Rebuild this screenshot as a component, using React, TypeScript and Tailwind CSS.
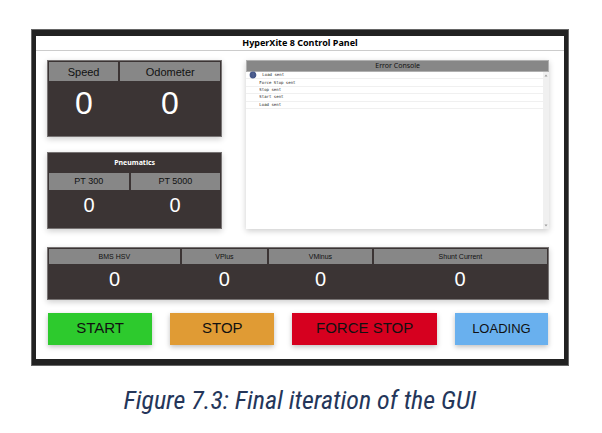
type Reading = { label: string; value: number; width: string };

const motion: Reading[] = [
  { label: "Speed", value: 0, width: "w-[41%]" },
  { label: "Odometer", value: 0, width: "w-[59%]" },
];

const pneumatics: Reading[] = [
  { label: "PT 300", value: 0, width: "w-[47%]" },
  { label: "PT 5000", value: 0, width: "w-[53%]" },
];

const electrical: Reading[] = [
  { label: "BMS HSV", value: 0, width: "w-[26.5%]" },
  { label: "VPlus", value: 0, width: "w-[17.5%]" },
  { label: "VMinus", value: 0, width: "w-[21%]" },
  { label: "Shunt Current", value: 0, width: "w-[35%]" },
];

const log = ["Load sent", "Force Stop sent", "Stop sent", "Start sent", "Load sent"];

const commands = [
  { label: "START", style: "bg-[#2dca2d] text-[15px]" },
  { label: "STOP", style: "bg-[#e09b34] text-[15px]" },
  { label: "FORCE STOP", style: "bg-[#d6001f] text-[15px]" },
  { label: "LOADING", style: "bg-[#69b0ee] text-[13px]" },
];

type TableProps = {
  readings: Reading[];
  title?: string;
  head: string;
  body: string;
};

function ReadingTable({ readings, title, head, body }: TableProps) {
  return (
    <div className="border border-[#777373] bg-[#3b3434] shadow-[0_2px_6px_rgba(0,0,0,0.2)]">
      <table className="w-full table-fixed border-collapse">
        {title && (
          <caption className="h-[19px] font-['Noto_Sans'] text-[7px] leading-[19px] font-bold text-white">
            {title}
          </caption>
        )}
        <thead>
          <tr>
            {readings.map((r) => (
              <th
                key={r.label}
                scope="col"
                className={`${r.width} ${head} border-x-2 border-y border-[#3b3434] bg-[#878787] p-0 font-normal text-[#111] first:border-l last:border-r`}
              >
                {r.label}
              </th>
            ))}
          </tr>
        </thead>
        <tbody>
          <tr>
            {readings.map((r) => (
              <td key={r.label} className={`${body} p-0 text-center align-top text-white`}>
                {r.value}
              </td>
            ))}
          </tr>
        </tbody>
      </table>
    </div>
  );
}

function ErrorConsole() {
  return (
    <section className="flex flex-col bg-white shadow-[0_2px_6px_rgba(0,0,0,0.2)]">
      <h2 className="border border-[#b0b0b0] bg-[#878787] text-center font-['Noto_Sans'] text-[7px] leading-[10px] text-[#111]">
        Error Console
      </h2>
      <div className="flex grow">
        <ul className="grid h-[37px] grow auto-rows-fr font-['DejaVu_Sans_Mono'] text-[4px] leading-[6px] text-[#222]">
          {log.map((line, i) => (
            <li key={i} className="flex items-center border-b border-[#f0f0f0] pl-[13px]">
              {i === 0 && (
                <svg viewBox="0 0 8 8" className="-ml-[10px] mr-[5px] size-2 shrink-0" aria-hidden="true">
                  <circle cx="4" cy="4" r="3.4" fill="#46588a" />
                  <path d="M3.4 2.8 4.2 2.2V5.8" fill="none" stroke="#5f6f9c" strokeWidth="0.6" />
                </svg>
              )}
              {line}
            </li>
          ))}
        </ul>
        <div className="flex w-[6px] flex-col items-center justify-between bg-[#f0f0f0] py-[2px]">
          <svg viewBox="0 0 4 3" className="h-[3px] w-1" aria-hidden="true">
            <path d="M0.5 2.5 2 0.5 3.5 2.5Z" fill="#999" />
          </svg>
          <svg viewBox="0 0 4 3" className="h-[3px] w-1" aria-hidden="true">
            <path d="M0.5 0.5 2 2.5 3.5 0.5Z" fill="#999" />
          </svg>
        </div>
      </div>
    </section>
  );
}

export default function App() {
  return (
    <figure className="bg-white pt-[29px] pr-[33px] pl-[31px] font-['Liberation_Sans',Arial,sans-serif]">
      <main className="border-x-[5px] border-y-[7px] border-[#222] bg-white outline-1 -outline-offset-1 outline-[#666]">
        <h1 className="border-b border-[#ccc] text-center font-['Noto_Sans'] text-[9px] leading-[14px] font-bold text-black">
          HyperXite 8 Control Panel
        </h1>
        <div className="flex flex-col gap-[18px] pt-[9px] pr-[15px] pb-[13px] pl-[11px]">
          <div className="grid grid-cols-[175fr_302fr] gap-6">
            <div className="flex flex-col gap-[15px]">
              <ReadingTable
                readings={motion}
                head="h-5 text-[11px] leading-[18px]"
                body="h-[54px] text-[32px] leading-[42px]"
              />
              <ReadingTable
                readings={pneumatics}
                title="Pneumatics"
                head="h-[18px] text-[9px] leading-4"
                body="h-[38px] text-[20px] leading-[28px]"
              />
            </div>
            <ErrorConsole />
          </div>
          <ReadingTable
            readings={electrical}
            head="h-4 text-[7px] leading-[14px]"
            body="h-[34px] text-[20px] leading-[28px]"
          />
        </div>
        <div className="grid grid-cols-[104fr_104fr_144fr_93fr] gap-[18px] pr-4 pb-[14px] pl-3">
          {commands.map((c) => (
            <button
              key={c.label}
              type="button"
              className={`${c.style} h-8 whitespace-nowrap text-[#111] shadow-[0_2px_5px_rgba(0,0,0,0.25)]`}
            >
              {c.label}
            </button>
          ))}
        </div>
      </main>
      <figcaption className="pt-[18px] text-center font-['Roboto_Condensed','Roboto',sans-serif] text-[26px] leading-8 text-[#24365a] italic">
        Figure 7.3: Final iteration of the GUI
      </figcaption>
    </figure>
  );
}
